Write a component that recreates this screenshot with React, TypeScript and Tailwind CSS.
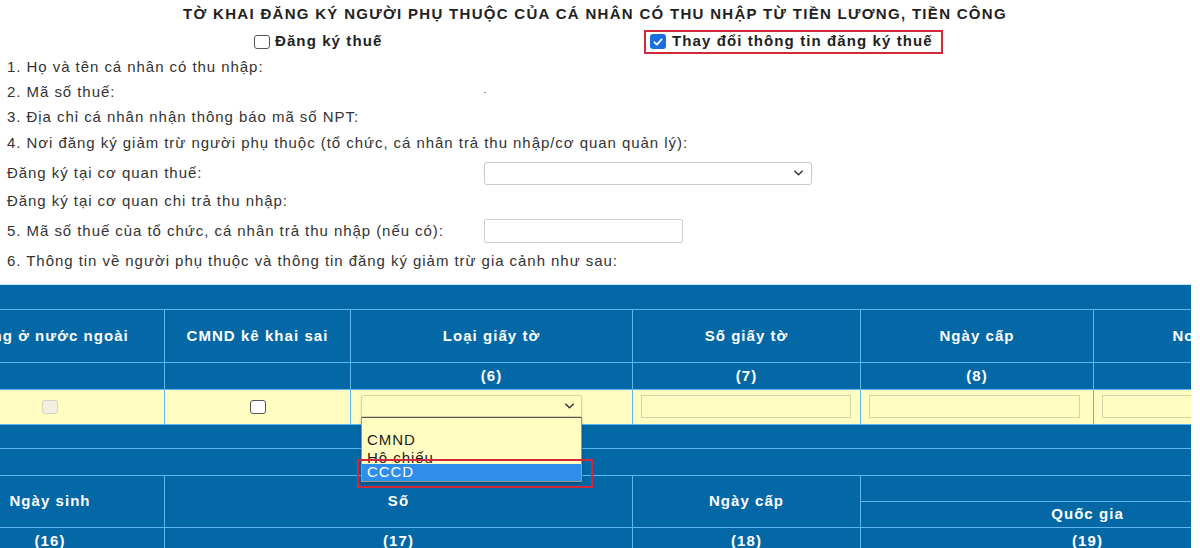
import React from "react";

const Chevron = ({ className = "" }: { className?: string }) => (
  <svg viewBox="0 0 12 8" className={className} fill="none" stroke="currentColor" strokeWidth="1.5">
    <path d="M1.5 1.5 6 6l4.5-4.5" />
  </svg>
);

const Check = () => (
  <svg viewBox="0 0 16 16" className="h-[12px] w-[12px]" fill="none" stroke="white" strokeWidth="2.4" strokeLinecap="round" strokeLinejoin="round">
    <path d="M3.2 8.4 6.5 11.6 12.8 4.6" />
  </svg>
);

const FieldRow = ({ children }: { children: React.ReactNode }) => (
  <div className="flex h-[25px] items-center pl-[7px]">{children}</div>
);

const App = () => {
  return (
    <div className="relative h-[548px] w-[1200px] overflow-hidden bg-white font-['Liberation_Sans',Arial,sans-serif] text-[15px] tracking-[0.95px] text-[#333]">
      {/* Title */}
      <div className="flex h-[28px] w-[1190px] items-center justify-center font-bold tracking-[1.3px] text-[#222]">
        TỜ KHAI ĐĂNG KÝ NGƯỜI PHỤ THUỘC CỦA CÁ NHÂN CÓ THU NHẬP TỪ TIỀN LƯƠNG, TIỀN CÔNG
      </div>

      {/* Checkboxes */}
      <div className="flex h-[27px] items-center pl-[254px] font-bold tracking-[1.1px] text-[#222]">
        <div className="flex w-[390px] items-center gap-[5px]">
          <span className="h-[14px] w-[16px] rounded-[3px] border-[1.5px] border-[#555] bg-white" />
          <span>Đăng ký thuế</span>
        </div>
        <div className="flex h-[24px] w-[299px] items-center gap-[6px] border-[2.5px] border-[#d2283a] pl-[4px]">
          <span className="flex h-[15px] w-[16px] items-center justify-center rounded-[3px] bg-[#1a6fe0]">
            <Check />
          </span>
          <span>Thay đổi thông tin đăng ký thuế</span>
        </div>
      </div>

      {/* Fields */}
      <FieldRow>1. Họ và tên cá nhân có thu nhập:</FieldRow>
      <FieldRow>
        <span className="w-[477px]">2. Mã số thuế:</span>
        <span className="h-[1px] w-[2px] bg-[#999]" />
      </FieldRow>
      <FieldRow>3. Địa chỉ cá nhân nhận thông báo mã số NPT:</FieldRow>
      <div className="flex h-[26px] items-center pl-[7px]">
        4. Nơi đăng ký giảm trừ người phụ thuộc (tổ chức, cá nhân trả thu nhập/cơ quan quản lý):
      </div>
      <div className="flex h-[34px] items-center pl-[7px]">
        <div className="w-[477px]">Đăng ký tại cơ quan thuế:</div>
        <div className="flex h-[23px] w-[328px] items-center justify-end rounded-[3px] border border-[#c9c9c9] bg-white pr-[7px] text-[#333]">
          <Chevron className="h-[8px] w-[11px]" />
        </div>
      </div>
      <div className="flex h-[22px] items-center pl-[7px]">Đăng ký tại cơ quan chi trả thu nhập:</div>
      <div className="flex h-[38px] items-center pl-[7px]">
        <div className="w-[477px]">5. Mã số thuế của tổ chức, cá nhân trả thu nhập (nếu có):</div>
        <div className="h-[24px] w-[199px] rounded-[2px] border border-[#cfcfcf] bg-white" />
      </div>
      <div className="flex h-[22px] items-center pl-[7px]">
        6. Thông tin về người phụ thuộc và thông tin đăng ký giảm trừ gia cảnh như sau:
      </div>
      <div className="h-[12px]" />

      {/* Table */}
      <div className="w-[1191px] overflow-hidden">
        <div className="-ml-[64px] w-[1378px] bg-[#0468a6] font-bold tracking-[1.05px] text-white">
          <div className="h-[25px] border-t border-[#bfe2f8]" />

          <div className="flex h-[53px] border-t border-[#5db6ee]">
            <div className="flex w-[228px] items-center justify-center">Sống ở nước ngoài</div>
            <div className="flex w-[186px] items-center justify-center border-l border-[#5db6ee]">CMND kê khai sai</div>
            <div className="flex w-[282px] items-center justify-center border-l border-[#5db6ee]">Loại giấy tờ</div>
            <div className="flex w-[228px] items-center justify-center border-l border-[#5db6ee]">Số giấy tờ</div>
            <div className="flex w-[233px] items-center justify-center border-l border-[#5db6ee]">Ngày cấp</div>
            <div className="flex w-[221px] items-center justify-center border-l border-[#5db6ee]">Nơi cấp</div>
          </div>

          <div className="flex h-[27px] border-t border-[#5db6ee]">
            <div className="w-[228px]" />
            <div className="w-[186px] border-l border-[#5db6ee]" />
            <div className="flex w-[282px] items-center justify-center border-l border-[#5db6ee]">(6)</div>
            <div className="flex w-[228px] items-center justify-center border-l border-[#5db6ee]">(7)</div>
            <div className="flex w-[233px] items-center justify-center border-l border-[#5db6ee]">(8)</div>
            <div className="w-[221px] border-l border-[#5db6ee]" />
          </div>

          <div className="flex h-[35px] border-t border-[#5db6ee] bg-[#fffdc2]">
            <div className="flex w-[228px] items-center justify-center">
              <span className="h-[14px] w-[16px] rounded-[3px] border border-[#d6d3bf] bg-[#f2f0e2]" />
            </div>
            <div className="flex w-[186px] items-center justify-center border-l border-[#5db6ee]">
              <span className="h-[14px] w-[16px] rounded-[3px] border-[1.5px] border-[#555] bg-white" />
            </div>
            <div className="flex w-[282px] items-start border-l border-[#5db6ee] pl-[10px] pt-[5px]">
              <div className="flex h-[22px] w-[221px] items-center justify-end rounded-[2px] border border-[#d9d5a6] bg-[#fffdc2] pr-[6px] text-[#333] shadow-[0_1px_2px_rgba(0,0,0,0.15)]">
                <Chevron className="h-[8px] w-[11px]" />
              </div>
            </div>
            <div className="flex w-[228px] items-start border-l border-[#5db6ee] pl-[8px] pt-[5px]">
              <div className="h-[23px] w-[210px] border border-[#d7d3a8] bg-[#fffdc2]" />
            </div>
            <div className="flex w-[233px] items-start border-l border-[#5db6ee] pl-[8px] pt-[5px]">
              <div className="h-[23px] w-[211px] border border-[#d7d3a8] bg-[#fffdc2]" />
            </div>
            <div className="flex w-[221px] items-start border-l border-[#5db6ee] pl-[8px] pt-[5px]">
              <div className="h-[23px] w-[205px] border border-[#d7d3a8] bg-[#fffdc2]" />
            </div>
          </div>

          <div className="h-[24px] border-t border-[#5db6ee]" />
          <div className="h-[27px] border-t border-[#5db6ee]" />

          <div className="flex h-[52px] border-t border-[#5db6ee]">
            <div className="flex w-[228px] items-center justify-center">Ngày sinh</div>
            <div className="flex w-[468px] items-center justify-center border-l border-[#5db6ee]">Số</div>
            <div className="flex w-[228px] items-center justify-center border-l border-[#5db6ee]">Ngày cấp</div>
            <div className="flex w-[454px] flex-col border-l border-[#5db6ee]">
              <div className="h-[26px]" />
              <div className="flex h-[26px] items-center justify-center border-t border-[#5db6ee]">Quốc gia</div>
            </div>
          </div>

          <div className="flex h-[28px] border-t border-[#5db6ee]">
            <div className="flex w-[228px] items-center justify-center">(16)</div>
            <div className="flex w-[468px] items-center justify-center border-l border-[#5db6ee]">(17)</div>
            <div className="flex w-[228px] items-center justify-center border-l border-[#5db6ee]">(18)</div>
            <div className="flex w-[454px] items-center justify-center border-l border-[#5db6ee]">(19)</div>
          </div>
        </div>
      </div>

      {/* Open dropdown list */}
      <div className="absolute left-[361px] top-[417px] flex h-[65px] w-[221px] flex-col border border-[#9a9a8a] border-t-[#555] bg-[#fffdc2] text-[#222] shadow-[0_2px_3px_rgba(0,0,0,0.25)]">
        <div className="h-[14px]" />
        <div className="flex h-[16px] items-center pl-[5px]">CMND</div>
        <div className="h-[16px] overflow-hidden pl-[5px] leading-[20px]">Hộ chiếu</div>
        <div className="flex h-[17px] items-center bg-[#2e8ee8] pl-[5px] text-white">CCCD</div>
      </div>
      <div className="absolute left-[357px] top-[459px] h-[29px] w-[236px] border-[2.5px] border-[#d2283a]" />
    </div>
  );
};

export default App;
